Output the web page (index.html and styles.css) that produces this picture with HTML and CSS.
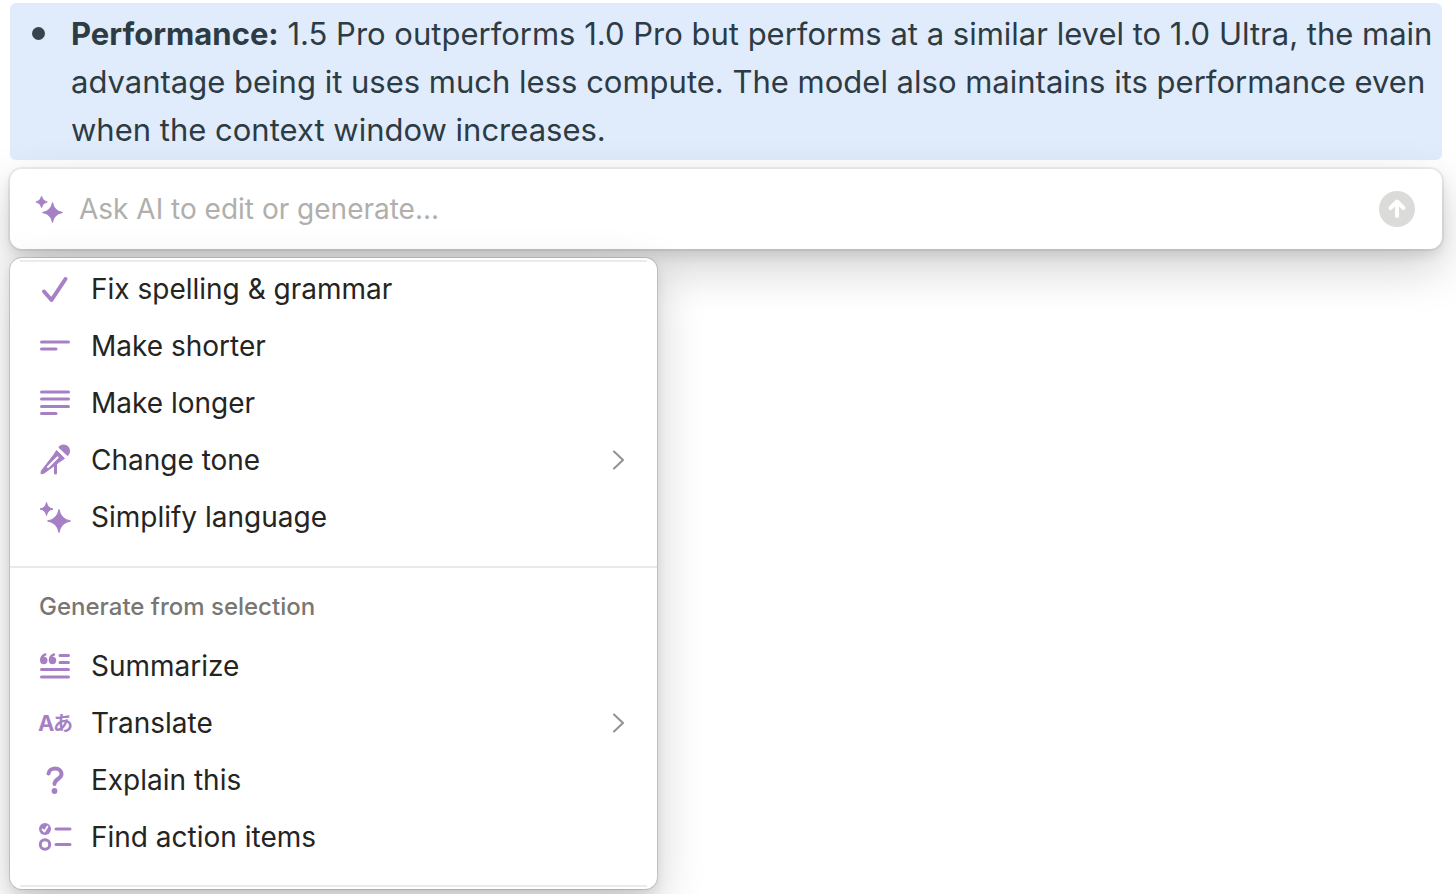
FILE: index.html
```
<!DOCTYPE html>
<html lang="en">
<head>
  <meta charset="UTF-8" />
  <meta name="viewport" content="width=device-width, initial-scale=1.0"/>
  <title>Ask AI</title>
  <link rel="stylesheet" href="styles.css">
</head>
<body>

  <svg class="sprite" aria-hidden="true">
    <symbol id="sparkles" viewBox="0 0 32 32">
      <path d="M20 8.500Q21.800 18.200 31.500 20Q21.800 21.800 20 31.500Q18.200 21.800 8.500 20Q18.200 18.200 20 8.500ZM7.500 1.500Q8.500 7 14 8Q8.500 9 7.500 14.500Q6.500 9 1 8Q6.500 7 7.500 1.500Z" fill="currentColor" stroke="currentColor" stroke-width="1" stroke-linejoin="round"/>
    </symbol>
    <symbol id="chevron" viewBox="0 0 12 20">
      <path d="M2 1.500L11 10L2 18.500" fill="none" stroke="currentColor" stroke-width="2" stroke-linecap="round" stroke-linejoin="round"/>
    </symbol>
  </svg>

  <!-- Selected text -->
  <ul class="selection">
    <li><strong>Performance:</strong> 1.5 Pro outperforms 1.0 Pro but performs at a similar level to 1.0 Ultra, the main advantage being it uses much less compute. The model also maintains its performance even when the context window increases.</li>
  </ul>

  <!-- Prompt -->
  <form class="ask-bar">
    <svg class="ask-icon" aria-hidden="true"><use href="#sparkles"/></svg>
    <input class="ask-input" type="text" placeholder="Ask AI to edit or generate..." aria-label="Ask AI to edit or generate">
    <button class="send" type="button" aria-label="Send">
      <svg viewBox="0 0 36 36" aria-hidden="true">
        <circle cx="18" cy="18" r="18" fill="#dbdbd9"/>
        <path d="M18 25V11.500M11.500 17L18 10.500L24.500 17" fill="none" stroke="#fff" stroke-width="4" stroke-linecap="round" stroke-linejoin="round"/>
      </svg>
    </button>
  </form>

  <!-- Menu -->
  <div class="menu">
    <div class="menu-group">
      <button class="menu-item" type="button">
        <svg class="icon" viewBox="0 0 32 32" aria-hidden="true"><path d="M5 18.500L12.500 27L26.500 6" class="line thick"/></svg>
        <span>Fix spelling &amp; grammar</span>
      </button>
      <button class="menu-item" type="button">
        <svg class="icon" viewBox="0 0 32 32" aria-hidden="true"><path d="M2.500 12H29.500M2.500 19H17" class="line"/></svg>
        <span>Make shorter</span>
      </button>
      <button class="menu-item" type="button">
        <svg class="icon" viewBox="0 0 32 32" aria-hidden="true"><path d="M2.500 5H29.500M2.500 12H29.500M2.500 19.500H29.500M2.500 26.500H17" class="line"/></svg>
        <span>Make longer</span>
      </button>
      <button class="menu-item" type="button">
        <svg class="icon" viewBox="0 0 32 32" aria-hidden="true">
          <path d="M20.600 3.200A5.500 5.500 0 0 1 28.600 10.800Z" fill="currentColor" stroke="currentColor" stroke-width="2" stroke-linejoin="round"/>
          <path d="M17.500 6.500L25.500 14.500L21 17.500L8 27L4.500 29.500L2 29.800L2.300 27L5 23.500L15 10.500Z" fill="currentColor" stroke="currentColor" stroke-width="1" stroke-linejoin="round"/>
          <path d="M18.500 13.500L9 23" fill="none" stroke="#fff" stroke-width="2.200" stroke-linecap="round"/>
          <path d="M16.500 20V29" class="line"/>
        </svg>
        <span>Change tone</span>
        <svg class="chevron" aria-hidden="true"><use href="#chevron"/></svg>
      </button>
      <button class="menu-item" type="button">
        <svg class="icon" aria-hidden="true"><use href="#sparkles"/></svg>
        <span>Simplify language</span>
      </button>
    </div>

    <div class="menu-group">
      <h2 class="menu-title">Generate from selection</h2>
      <button class="menu-item" type="button">
        <svg class="icon" viewBox="0 0 32 32" aria-hidden="true">
          <path d="M21 5.500H29.500M21 12.500H29.500M2.500 19.500H29.500M2.500 27H29.500" class="line"/>
          <circle cx="4.800" cy="10.500" r="3.700" fill="currentColor"/>
          <circle cx="13.500" cy="10.500" r="3.700" fill="currentColor"/>
          <path d="M2.300 10.500Q2 6 6.300 4.500M11 10.500Q10.700 6 15 4.500" fill="none" stroke="currentColor" stroke-width="2.400" stroke-linecap="round"/>
        </svg>
        <span>Summarize</span>
      </button>
      <button class="menu-item" type="button">
        <svg class="icon" viewBox="0 0 32 32" aria-hidden="true">
          <text x="-1" y="24" class="latin">A</text>
          <text x="14" y="24" class="kana">あ</text>
        </svg>
        <span>Translate</span>
        <svg class="chevron" aria-hidden="true"><use href="#chevron"/></svg>
      </button>
      <button class="menu-item" type="button">
        <svg class="icon" viewBox="0 0 32 32" aria-hidden="true">
          <path d="M9.500 9.500C10.500 2.800 22.500 2.800 22.500 10C22.500 15 15.500 15 15.500 20" class="line thick"/>
          <circle cx="15.500" cy="27" r="2.900" fill="currentColor"/>
        </svg>
        <span>Explain this</span>
      </button>
      <button class="menu-item" type="button">
        <svg class="icon" viewBox="0 0 32 32" aria-hidden="true">
          <circle cx="6" cy="8" r="6" fill="currentColor"/>
          <path d="M3.500 8.500L5.500 10.500L8.500 5.500" fill="none" stroke="#fff" stroke-width="1.800" stroke-linecap="round" stroke-linejoin="round"/>
          <circle cx="6" cy="23.500" r="4.700" class="line"/>
          <path d="M17 8H31M17 23.500H31" class="line"/>
        </svg>
        <span>Find action items</span>
      </button>
    </div>
  </div>

</body>
</html>
```
FILE: styles.css
```
*, *::before, *::after {
  box-sizing: border-box;
}

body {
  margin: 0;
  padding: 3px 14px 5px 10px;
  font-family: Inter, "Liberation Sans", sans-serif;
  font-size: 28px;
  color: #25241f;
  background: #fff;
}

.sprite {
  display: none;
}

.selection {
  margin: 0 0 9px;
  padding: 7px 0 6px 61px;
  list-style: none;
  font-size: 31px;
  line-height: 48px;
  color: #2d3b44;
  background: #e0ecfb;
  border-radius: 6px;
}

.selection li::before {
  content: "";
  float: left;
  width: 13px;
  height: 13px;
  margin: 17px 0 0 -39px;
  border-radius: 50%;
  background: #37444e;
}

.selection strong {
  font-weight: 700;
}

.ask-bar {
  display: flex;
  align-items: center;
  height: 80px;
  margin-bottom: 9px;
  padding: 0 27px 0 25px;
  background: #fff;
  border-radius: 12px;
  box-shadow: 0 0 0 2px rgba(15, 15, 15, .06), 0 6px 12px rgba(15, 15, 15, .1), 0 18px 48px rgba(15, 15, 15, .2);
}

.ask-icon {
  width: 28px;
  height: 28px;
  color: #a680c4;
}

.ask-input {
  flex: 1;
  min-width: 0;
  padding: 0 16px;
  border: none;
  outline: none;
  background: none;
  font: inherit;
  color: inherit;
}

.ask-input::placeholder {
  color: #b0afac;
  opacity: 1;
}

.send {
  width: 36px;
  height: 36px;
  padding: 0;
  border: none;
  background: none;
  cursor: pointer;
}

.send svg {
  display: block;
}

.menu {
  max-width: 647px;
  background:
    linear-gradient(#ebebeb, #ebebeb) center top 2px / calc(100% - 20px) 2px no-repeat,
    linear-gradient(#ebebeb, #ebebeb) center bottom 2px / calc(100% - 20px) 2px no-repeat,
    #fff;
  border-radius: 12px;
  box-shadow: 0 0 0 1px rgba(15, 15, 15, .14), 0 6px 12px rgba(15, 15, 15, .1), 0 18px 48px rgba(15, 15, 15, .2);
}

.menu-group {
  padding: 2px 0 21px;
}

.menu-group + .menu-group {
  padding: 8px 0 24px;
  border-top: 2px solid #e9e9e9;
}

.menu-title {
  margin: 0;
  padding: 0 29px;
  font-size: 24px;
  font-weight: 500;
  line-height: 61px;
  color: #787774;
}

.menu-item {
  display: flex;
  align-items: center;
  width: 100%;
  height: 57px;
  padding: 0 33px 0 29px;
  border: none;
  background: none;
  font: inherit;
  color: inherit;
  text-align: left;
  cursor: pointer;
}

.icon {
  flex: none;
  width: 32px;
  height: 32px;
  margin-right: 20px;
  overflow: visible;
  color: #a680c4;
}

.line {
  fill: none;
  stroke: currentColor;
  stroke-width: 3;
  stroke-linecap: round;
  stroke-linejoin: round;
}

.thick {
  stroke-width: 4;
}

.latin, .kana {
  fill: currentColor;
  font-weight: 700;
}

.latin {
  font-size: 22px;
}

.kana {
  font-family: "Noto Sans CJK JP", sans-serif;
  font-size: 20px;
}

.chevron {
  width: 12px;
  height: 20px;
  margin-left: auto;
  color: #91918e;
}
```
